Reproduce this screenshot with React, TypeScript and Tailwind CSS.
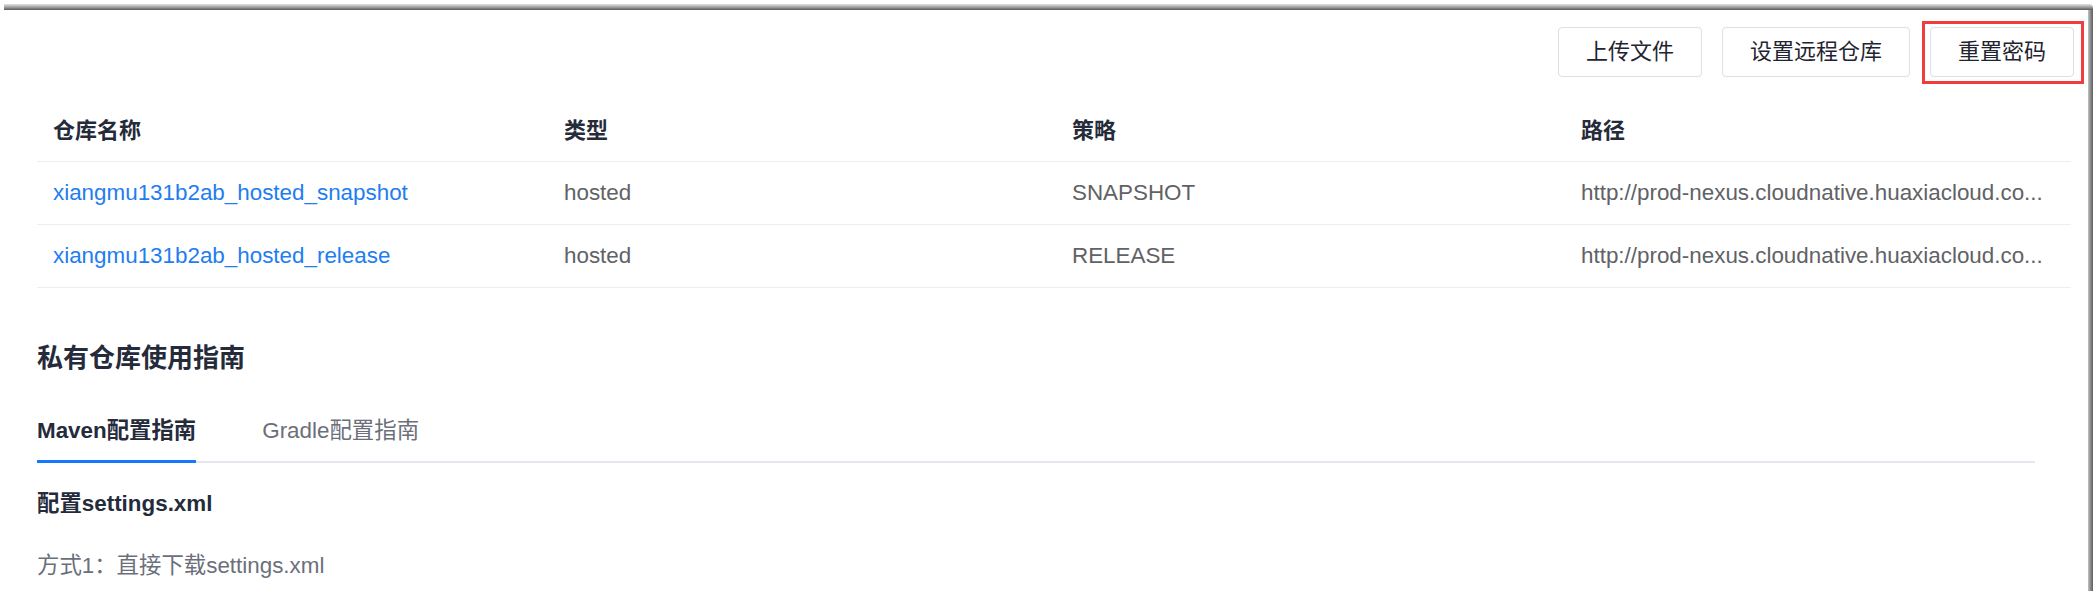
import React from "react"

const rows = [
  {
    name: "xiangmu131b2ab_hosted_snapshot",
    type: "hosted",
    policy: "SNAPSHOT",
    path: "http://prod-nexus.cloudnative.huaxiacloud.co...",
  },
  {
    name: "xiangmu131b2ab_hosted_release",
    type: "hosted",
    policy: "RELEASE",
    path: "http://prod-nexus.cloudnative.huaxiacloud.co...",
  },
]

const font = "font-['Liberation_Sans','Noto_Sans_CJK_SC',sans-serif]"

const Button = ({ children, marked = false }: { children: React.ReactNode; marked?: boolean }) => (
  <div className="relative">
    <button className="h-[50px] px-[27px] border border-[#dcdfe6] rounded-[4px] bg-white text-[22px] text-[#1f2430] flex items-center leading-none">
      {children}
    </button>
    {marked && (
      <span className="absolute -left-[8px] -right-[10px] -top-[6px] -bottom-[7px] border-[3px] border-[#f03c3c] pointer-events-none" />
    )}
  </div>
)

export default function App() {
  return (
    <div className={`w-[2099px] h-[591px] bg-white overflow-hidden ${font}`}>
      <div className="ml-[4px] mt-[4px] w-[2089px] h-[587px] flex flex-col">
        {/* window shadow top */}
        <div className="h-[6px] rounded-tr-[4px] bg-linear-to-b from-[#e4e4e4] via-[#a5a5a5] to-[#5a5a5a]" />
        <div className="flex flex-1 min-h-0">
          <div className="flex-1 pl-[33px] pr-[14px]">
            <div className="flex justify-end gap-[20px] pt-[17px]">
              <Button>上传文件</Button>
              <Button>设置远程仓库</Button>
              <Button marked>重置密码</Button>
            </div>

            <div className="w-[2034px] mt-[23px]">
              <div className="flex h-[62px] items-center border-b border-[#ebeef5] text-[22px] font-bold text-[#252b3a]">
                <div className="w-[511px] pl-[16px]">仓库名称</div>
                <div className="w-[508px] pl-[16px]">类型</div>
                <div className="w-[509px] pl-[16px]">策略</div>
                <div className="flex-1 pl-[16px]">路径</div>
              </div>
              {rows.map((r) => (
                <div
                  key={r.name}
                  className="flex h-[63px] items-center border-b border-[#ebeef5] text-[22.4px] text-[#606266]"
                >
                  <div className="w-[511px] pl-[16px] text-[#1e7df0]">{r.name}</div>
                  <div className="w-[508px] pl-[16px]">{r.type}</div>
                  <div className="w-[509px] pl-[16px]">{r.policy}</div>
                  <div className="flex-1 min-w-0 pl-[16px] whitespace-nowrap">{r.path}</div>
                </div>
              ))}
            </div>

            <div className="w-[1998px]">
              <h2 className="mt-[50px] h-[40px] flex items-center text-[26px] font-bold text-[#252b3a]">
                私有仓库使用指南
              </h2>

              <div className="mt-[23px] flex gap-[66px] border-b-2 border-[#e4e7ed]">
                <div className="relative h-[60px] flex items-center text-[22.4px] font-bold text-[#252b3a]">
                  Maven配置指南
                  <span className="absolute left-0 right-0 -bottom-[2px] h-[3px] bg-[#1677ff]" />
                </div>
                <div className="h-[60px] flex items-center text-[22.4px] text-[#6b6f7a]">Gradle配置指南</div>
              </div>

              <div className="mt-[26px] h-[30px] flex items-center text-[22.4px] font-bold text-[#252b3a]">
                配置settings.xml
              </div>
              <div className="mt-[32px] h-[30px] flex items-center text-[22.4px] text-[#6b6f7a]">
                方式1：直接下载settings.xml
              </div>
            </div>
          </div>
          {/* window shadow right */}
          <div className="w-[5px] bg-linear-to-r from-[#c4c4c4] via-[#8a8a8a] to-[#5f5f5f]" />
        </div>
      </div>
    </div>
  )
}
